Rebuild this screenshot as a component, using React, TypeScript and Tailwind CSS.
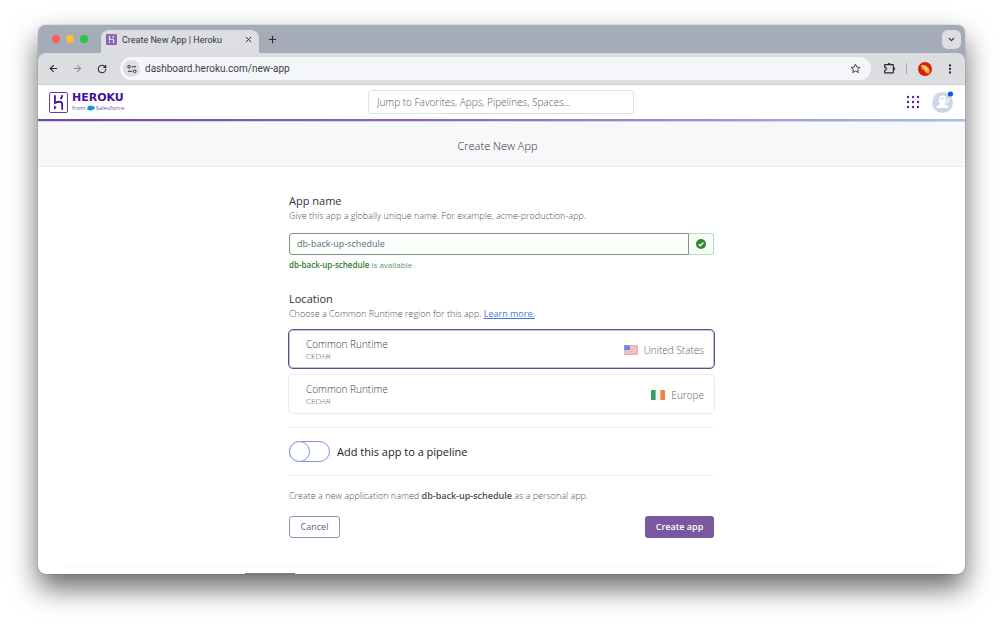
import type { ReactNode } from "react";
import { ArrowLeft, ArrowRight, ChevronDown, EllipsisVertical, Plus, RotateCw, X } from "lucide-react";

const regions = [
  { id: "us", name: "United States", runtime: "Common Runtime", generation: "CEDAR" },
  { id: "eu", name: "Europe", runtime: "Common Runtime", generation: "CEDAR" },
];

const dots = [2, 7, 12];

const UsFlag = () => (
  <svg className="h-[10px] w-[14px]" viewBox="0 0 14 10" aria-hidden="true">
    <rect width="14" height="10" rx="1" fill="#f3c3c9" />
    <path d="M0.5 6.5H14M0.5 8.5H14M6 2.5H14M6 4.5H14" stroke="#efb6be" strokeWidth="0.8" />
    <rect width="6" height="5" rx="0.6" fill="#5b8fe6" />
    <rect x="0.3" y="0.3" width="13.4" height="9.4" rx="1" fill="none" stroke="#cf9aa8" strokeWidth="0.6" />
  </svg>
);

const IrelandFlag = () => (
  <svg className="h-[10px] w-[14px]" viewBox="0 0 14 10" aria-hidden="true">
    <rect width="14" height="10" rx="1" fill="#f4f4f0" />
    <path d="M1 0H4.6V10H1A1 1 0 0 1 0 9V1A1 1 0 0 1 1 0Z" fill="#2f9e69" />
    <path d="M9.4 0H13A1 1 0 0 1 14 1V9A1 1 0 0 1 13 10H9.4Z" fill="#ef8443" />
  </svg>
);

const HerokuGlyph = () => (
  <>
    <path d="M5.6 3V10.4C7.8 9.3 12.5 8.2 12.5 11.4V17" fill="none" stroke="currentColor" strokeWidth="1.7" />
    <path d="M4.8 12.6L7.2 14.8L4.8 17Z" fill="currentColor" />
    <path d="M12.6 3C12.5 4.5 11.9 5.7 10.9 6.8" fill="none" stroke="currentColor" strokeWidth="1.7" />
  </>
);

const IconButton = ({ label, children }: { label: string; children: ReactNode }) => (
  <button type="button" aria-label={label} className="flex size-4 shrink-0 items-center justify-center">
    {children}
  </button>
);

const TabStrip = () => (
  <div className="flex h-7 items-end bg-[#a5abb7] pr-1">
    <div className="flex h-7 w-[63px] items-center gap-[6px] pl-[14px]">
      <span className="size-2 rounded-full bg-[#fe5f57]" />
      <span className="size-2 rounded-full bg-[#febc2e]" />
      <span className="size-2 rounded-full bg-[#28c840]" />
    </div>
    <div className="flex h-[23px] w-[158px] items-center rounded-t-lg bg-[#dcdee3] pb-1 pl-[5px] pr-[6px]">
      <svg className="h-[11px] w-[11px]" viewBox="0 0 18 20" preserveAspectRatio="none" aria-hidden="true">
        <rect width="18" height="20" rx="2" fill="#8a63b5" />
        <g className="text-white">
          <HerokuGlyph />
        </g>
      </svg>
      <span className="ml-[5px] flex-1 font-['Roboto',sans-serif] text-[9px] leading-3 text-[#33353b]">
        Create New App | Heroku
      </span>
      <button type="button" aria-label="Close tab">
        <X size={9} strokeWidth={2.6} color="#2b2c30" />
      </button>
    </div>
    <button type="button" aria-label="New tab" className="mb-2 ml-2">
      <Plus size={11} strokeWidth={2.4} color="#2b2c30" />
    </button>
    <button
      type="button"
      aria-label="Search tabs"
      className="mb-1 ml-auto flex size-[19px] items-center justify-center rounded-md bg-[#dcdee3]"
    >
      <ChevronDown size={9} strokeWidth={3} color="#2b2c30" />
    </button>
  </div>
);

const Toolbar = () => (
  <div className="bg-[#a5abb7]">
    <div className="flex h-8 items-center rounded-t-lg border-b border-[#cfd0d3] bg-[#dcdde0] px-[7px]">
      <IconButton label="Back">
        <ArrowLeft size={11} strokeWidth={2.4} color="#2b2c30" />
      </IconButton>
      <span className="w-2" />
      <IconButton label="Forward">
        <ArrowRight size={11} strokeWidth={2.2} color="#85878c" />
      </IconButton>
      <span className="w-[9px]" />
      <IconButton label="Reload">
        <RotateCw size={10} strokeWidth={2.6} color="#2b2c30" />
      </IconButton>
      <div className="ml-[10px] flex h-[23px] flex-1 items-center rounded-full bg-[#f4f6f9] px-[3px]">
        <button
          type="button"
          aria-label="View site information"
          className="flex size-[17px] items-center justify-center rounded-full bg-[#dcdee1]"
        >
          <svg className="size-[10px]" viewBox="0 0 20 20" fill="none" stroke="#33353b" strokeWidth="2" aria-hidden="true">
            <circle cx="4" cy="5.5" r="2.6" />
            <path d="M9.5 5.5H18M2 14.5H10.5" />
            <circle cx="15.5" cy="14.5" r="2.6" />
          </svg>
        </button>
        <input
          aria-label="Address"
          defaultValue="dashboard.heroku.com/new-app"
          className="ml-[5px] h-5 min-w-0 flex-1 bg-transparent font-['Roboto',sans-serif] text-[10px] text-[#3c3e44] outline-none"
        />
        <IconButton label="Bookmark this page">
          <svg className="size-[11px]" viewBox="0 0 24 24" fill="none" stroke="#33353b" strokeWidth="2" aria-hidden="true">
            <path d="M12 2.5L14.8 9L21.8 9.6L16.5 14.2L18.1 21L12 17.4L5.9 21L7.5 14.2L2.2 9.6L9.2 9Z" />
          </svg>
        </IconButton>
        <span className="w-[5px]" />
      </div>
      <span className="w-[10px]" />
      <IconButton label="Extensions">
        <svg className="size-[13px]" viewBox="0 0 24 24" fill="none" stroke="#2b2c30" strokeWidth="2.2" aria-hidden="true">
          <path d="M3 5H19V20H3V15.5C7.5 15.5 7.5 9.5 3 9.5Z" strokeLinejoin="round" />
          <path d="M9 4A2.4 2.4 0 0 1 13.5 4ZM20 10.2A2.4 2.4 0 0 1 20 14.8Z" fill="#2b2c30" stroke="#2b2c30" strokeWidth="1.6" />
        </svg>
      </IconButton>
      <span className="ml-[9px] h-[11px] w-px bg-[#a9abb0]" />
      <button type="button" aria-label="Profile" className="ml-[11px]">
        <svg className="size-[14px]" viewBox="0 0 14 14" aria-hidden="true">
          <circle cx="7" cy="7" r="7" fill="#d5200c" />
          <path d="M3 3.6C5 1.8 7.6 3 8.8 4.4C11.4 5 12.6 9.2 10.8 11.4C8.4 11.8 7.2 9.6 6.2 8.4C4.2 7.6 2.6 5.8 3 3.6Z" fill="#f5a53c" />
          <path d="M5.2 4.4C6.8 4.4 8 6 8.8 8" fill="none" stroke="#fbe3a4" strokeWidth="1.4" />
        </svg>
      </button>
      <span className="w-[10px]" />
      <IconButton label="Menu">
        <EllipsisVertical size={12} strokeWidth={2.6} color="#2b2c30" />
      </IconButton>
    </div>
  </div>
);

const Header = () => (
  <header>
    <div className="flex h-[34px] items-center pr-3 pl-[11px]">
      <div className="flex flex-1">
        <a href="#" aria-label="Heroku from Salesforce" className="flex items-center gap-1 text-[#43109a]">
          <svg className="h-[21px] w-[19px]" viewBox="0 0 18 20" aria-hidden="true">
            <rect x="0.5" y="0.5" width="17" height="19" rx="0.8" fill="none" stroke="currentColor" strokeWidth="0.8" />
            <HerokuGlyph />
          </svg>
          <span className="flex flex-col">
            <span className="font-['DejaVu_Sans',sans-serif] text-[11px] leading-3 font-bold">HEROKU</span>
            <span className="flex items-center gap-px text-[6px] leading-[9px] text-[#7350b8]">
              from
              <svg className="h-[6px] w-2" viewBox="0 0 16 12" fill="#1798d6" aria-hidden="true">
                <circle cx="5" cy="4.6" r="3.4" />
                <circle cx="9.4" cy="4.2" r="3" />
                <circle cx="12.6" cy="5.8" r="3.2" />
                <circle cx="3.4" cy="7.4" r="3" />
                <circle cx="8" cy="8" r="3.6" />
              </svg>
              Salesforce
            </span>
          </span>
        </a>
      </div>
      <input
        type="search"
        aria-label="Jump to"
        placeholder="Jump to Favorites, Apps, Pipelines, Spaces..."
        className="h-6 w-[266px] rounded-[3px] border border-[#d9e3ee] px-2 text-[10px] font-light text-[#3f3f44] placeholder:text-[#555962]"
      />
      <div className="flex flex-1 items-center justify-end gap-3">
        <button type="button" aria-label="Switch product">
          <svg className="size-[14px]" viewBox="0 0 14 14" fill="#56209a" aria-hidden="true">
            {dots.map((y) => dots.map((x) => <circle key={`${x}-${y}`} cx={x} cy={y} r="1.2" />))}
          </svg>
        </button>
        <button type="button" aria-label="Account">
          <svg className="size-[21px] overflow-visible" viewBox="0 0 21 21" aria-hidden="true">
            <circle cx="10.5" cy="10.5" r="10.5" fill="#ced7e8" />
            <path d="M6.8 6.2C6.8 3 13.8 2.6 14 6C14.6 9.6 13 11.6 12 12.2C14.8 12.8 16.6 14 16.6 16H4.4C4.4 14 6 12.8 8.8 12.2C7.4 11.2 6.6 9 6.8 6.2Z" fill="#fff" />
            <path d="M14.4 11.4L17.2 6.2" stroke="#fff" strokeWidth="1.2" />
            <path d="M8 6.6H12.8" stroke="#ced7e8" strokeWidth="1" />
            <circle cx="18.5" cy="2" r="2.6" fill="#0b5cd8" />
          </svg>
        </button>
      </div>
    </div>
    <div className="h-[2px] bg-linear-to-r from-[#6c4a9c] via-[#8a76bb] to-[#a4c1e6]" />
    <div className="h-px bg-[#dccdf2]" />
  </header>
);

const AppNameField = () => (
  <section>
    <label htmlFor="app-name" className="block text-[11px] leading-4 text-[#2f2f40]">
      App name
    </label>
    <p className="text-[9px] leading-[14px] font-light text-[#4c505b]">
      Give this app a globally unique name. For example, acme-production-app.
    </p>
    <div className="mt-[10px] flex h-[22px]">
      <input
        id="app-name"
        defaultValue="db-back-up-schedule"
        className="min-w-0 flex-1 rounded-l-[3px] border border-[#7c9a7a] bg-[#fdfffd] px-[7px] text-[9px] text-[#666a70]"
      />
      <span className="flex w-[25px] items-center justify-center rounded-r-[3px] border border-l-0 border-[#b5dcb8] bg-[#f6fdf6]">
        <svg className="size-[10px]" viewBox="0 0 10 10" aria-hidden="true">
          <circle cx="5" cy="5" r="5" fill="#2f8a2c" />
          <path d="M2.7 5.2L4.4 6.8L7.4 3.4" fill="none" stroke="#fff" strokeWidth="1.3" />
        </svg>
      </span>
    </div>
    <p className="mt-[3px] text-[8px] leading-[14px] text-[#5f975d]">
      <strong className="font-semibold text-[#2f7d2c]">db-back-up-schedule</strong> is available
    </p>
  </section>
);

const LocationField = () => (
  <fieldset className="mt-[19px]">
    <legend className="text-[11px] leading-4 text-[#2f2f40]">Location</legend>
    <p className="text-[9px] leading-[14px] font-light text-[#4c505b]">
      Choose a Common Runtime region for this app.{" "}
      <a href="#" className="font-normal text-[#4a74dc] underline">
        Learn more.
      </a>
    </p>
    <div className="-mx-px mt-2 flex flex-col gap-[5px]">
      {regions.map((region) => (
        <label
          key={region.id}
          className="relative flex h-10 items-center justify-between rounded-[5px] border border-[#e4ebf2] pt-px pr-[10px] pl-[17px] has-checked:border-[#6a4791] has-checked:shadow-[inset_0_0_0_1px_rgba(106,71,145,0.35)]"
        >
          <input type="radio" name="region" defaultChecked={region.id === "us"} className="sr-only" />
          <span className="flex flex-col">
            <span className="text-[10px] leading-3 font-light text-[#3a3d46]">{region.runtime}</span>
            <span className="text-[8px] leading-3 font-light text-[#4c505b]">{region.generation}</span>
          </span>
          <span className="flex items-center gap-[6px] text-[10px] leading-3 font-light text-[#5d616c]">
            {region.id === "us" ? <UsFlag /> : <IrelandFlag />}
            {region.name}
          </span>
        </label>
      ))}
    </div>
  </fieldset>
);

const App = () => {
  return (
    <div className="bg-white px-[38px] pt-[25px] pb-[50px] font-['Open_Sans','Noto_Sans',sans-serif]">
      <div className="overflow-hidden rounded-lg bg-white shadow-[0_0_1px_rgba(0,0,0,0.6),0_14px_28px_rgba(0,0,0,0.6)]">
        <TabStrip />
        <Toolbar />
        <Header />
        <div className="flex h-[45px] items-center justify-center border-b border-[#e8edf1] bg-[#f7f8fa] pt-1 pr-2">
          <h1 className="text-[11px] leading-4 font-light text-[#2c2c36]">Create New App</h1>
        </div>
        <main className="mx-auto max-w-[425px] pt-[26px]">
          <form onSubmit={(e) => e.preventDefault()}>
            <AppNameField />
            <LocationField />
            <hr className="mt-[13px] border-[#edf0f3]" />
            <label className="mt-[13px] flex items-center gap-[7px] text-[11px] leading-4 text-[#1c1c22]">
              <input
                type="checkbox"
                role="switch"
                className="flex h-[21px] w-[41px] appearance-none rounded-full border border-[#8192e0] before:-m-px before:size-[21px] before:rounded-full before:border before:border-[#8192e0] before:bg-white checked:justify-end"
              />
              Add this app to a pipeline
            </label>
            <hr className="mt-[13px] border-[#edf0f3]" />
            <p className="mt-3 text-[9px] leading-4 font-light text-[#4c505b]">
              Create a new application named <strong className="font-semibold text-[#4c4c58]">db-back-up-schedule</strong> as a
              personal app.
            </p>
            <div className="mt-3 flex justify-between">
              <button
                type="button"
                className="h-[22px] w-[51px] rounded-[3px] border border-[#9b8fb5] text-[9px] font-medium text-[#69558f]"
              >
                Cancel
              </button>
              <button type="submit" className="h-[22px] w-[69px] rounded-[3px] bg-[#79589f] text-[9px] font-semibold text-white">
                Create app
              </button>
            </div>
          </form>
        </main>
        <footer className="mt-7 px-[25px]">
          <hr className="border-[#f5f6f7]" />
          <div className="mt-[6px] ml-[182px] h-px w-[50px] bg-[#7d7a9c]" />
        </footer>
      </div>
    </div>
  );
};

export default App;
